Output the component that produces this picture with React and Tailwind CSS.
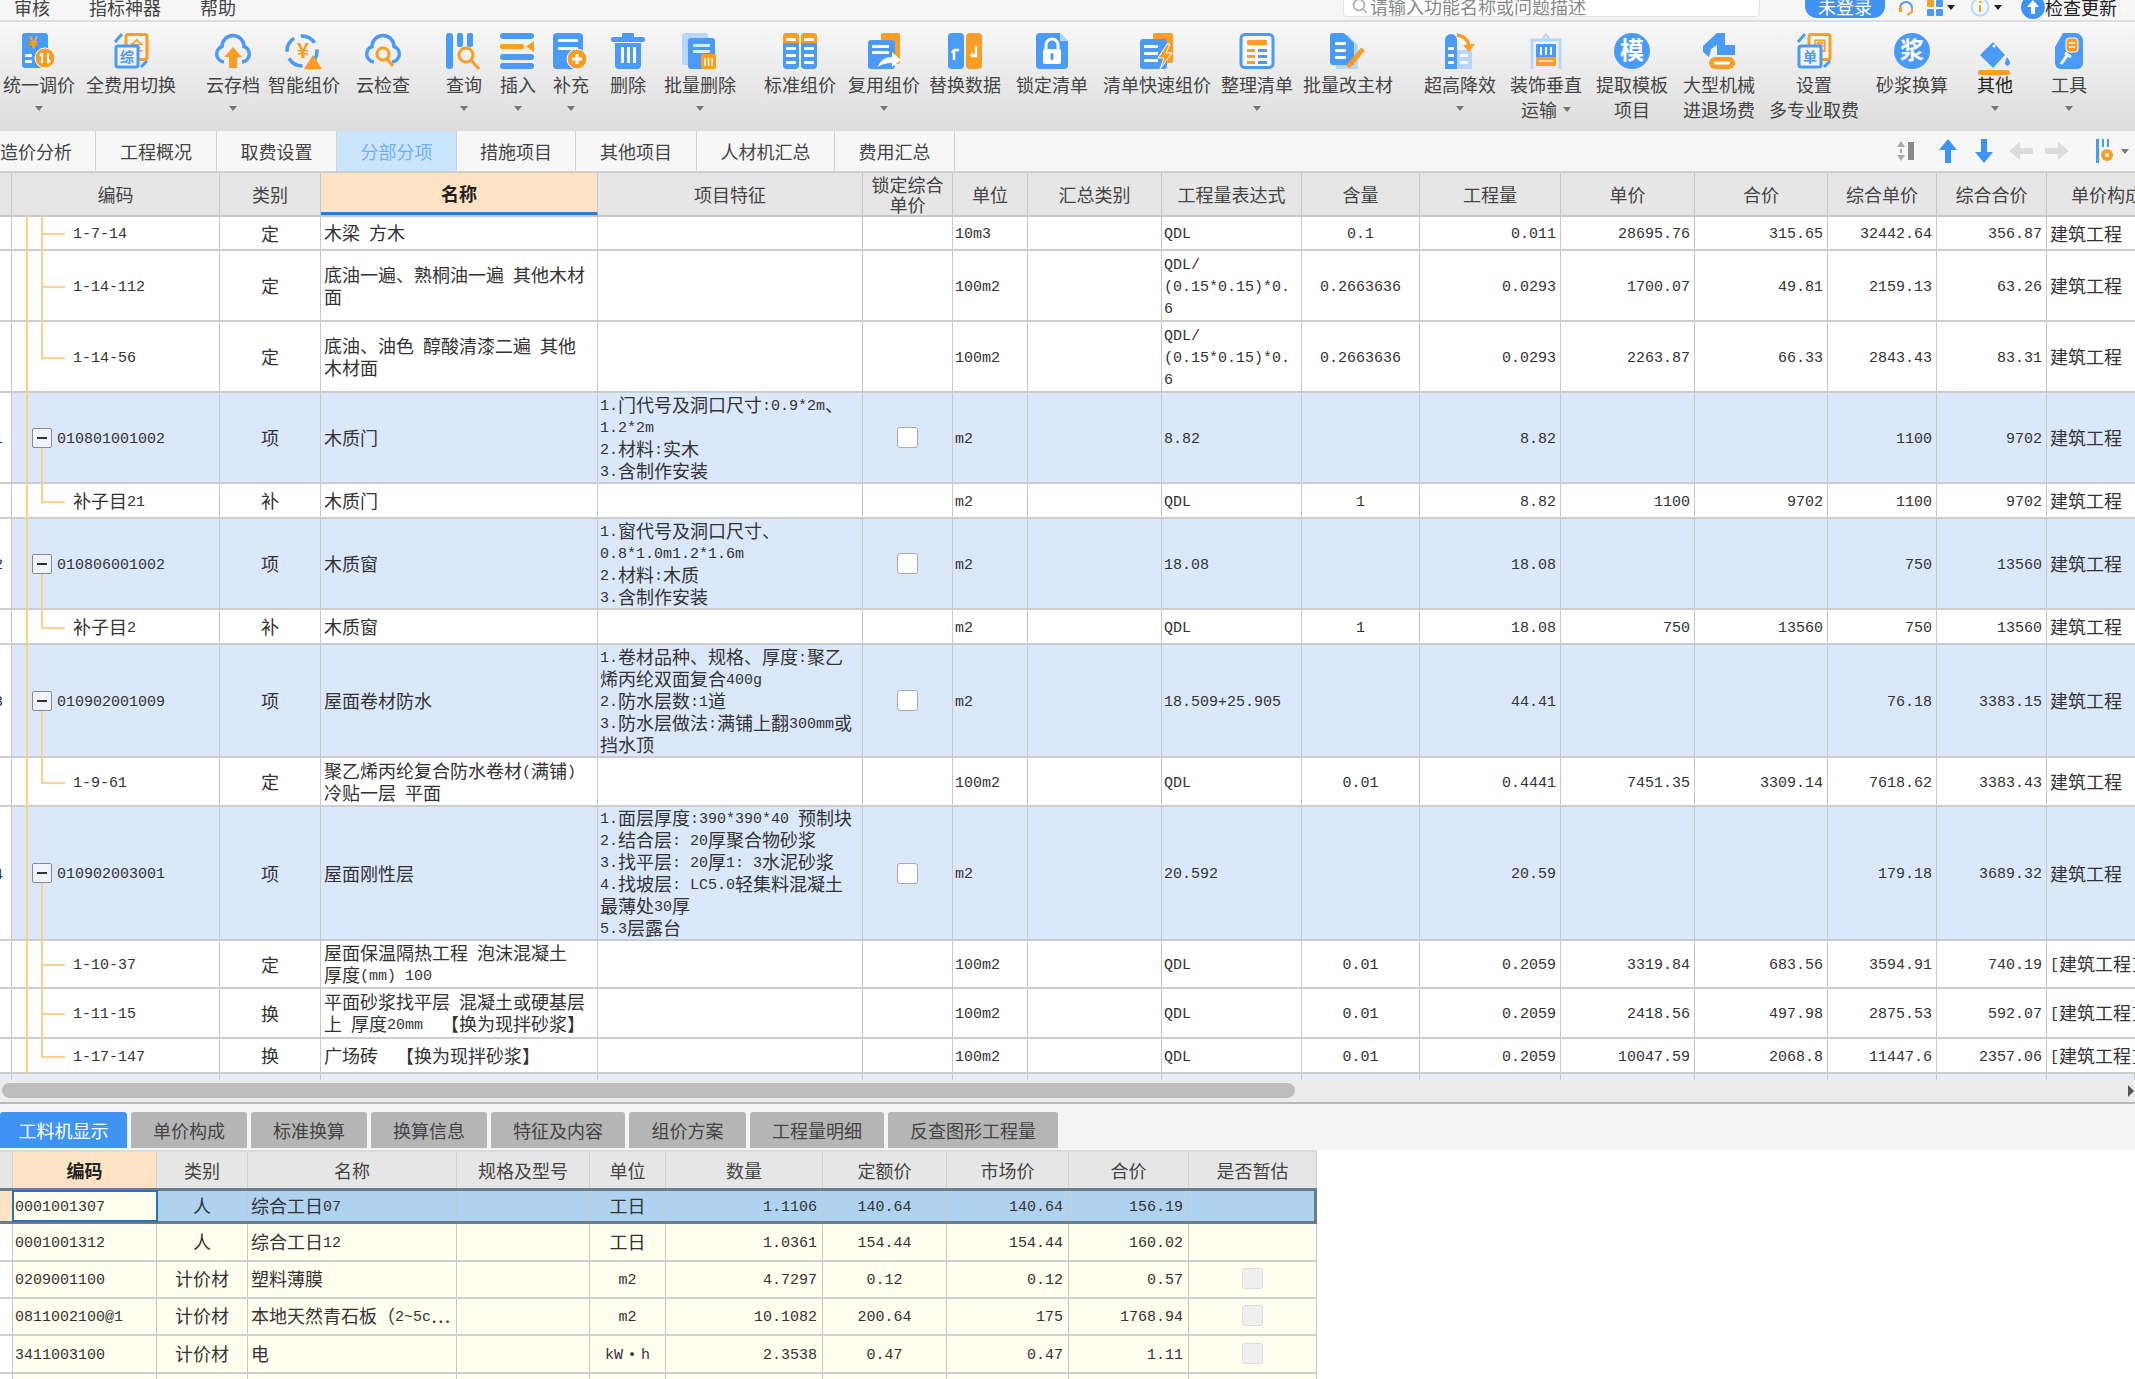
import React from "react";

const B = "#4a9bf7";
const O = "#fa9d22";
const L = "#b6d6fb";

// Latin runs in the original are half width (9px), CJK is 18px, so split them
function T({ children }) {
  const parts = String(children).split(/([\x20-\x7e]+)/);
  return (
    <span>
      {parts.map((p, i) =>
        i % 2 === 1 ? (
          <span key={i} className="relative -top-[2px] font-['Liberation_Mono',monospace] text-[15px] leading-none">{p}</span>
        ) : (
          <span key={i}>{p}</span>
        )
      )}
    </span>
  );
}

const Lines = ({ c = "#fff", x = 6, ys = [], w = 14 }) =>
  ys.map((y) => <rect key={y} x={x} y={y} width={w} height="3" rx="1" fill={c} />);

const CLOUD = "M9 29A8 8 0 0 1 7 13.5A11 11 0 0 1 29 13.5A8 8 0 0 1 27 29";

function DocPair({ top, bottom }) {
  return (
    <>
      <rect x="13" y="1.5" width="21" height="25" rx="2" fill="none" stroke={O} strokeWidth="3" />
      <text x="24" y="17" fontSize="13" fill={O} textAnchor="middle" fontWeight="700">{top}</text>
      <rect x="3" y="13" width="22" height="21" rx="2" fill="#f4f4f4" stroke={B} strokeWidth="3" />
      <text x="14" y="29" fontSize="14" fill={B} textAnchor="middle" fontWeight="700">{bottom}</text>
      <path d="M2 9L9 1M28 34L34 28" stroke={B} strokeWidth="3" fill="none" />
    </>
  );
}

const icons = {
  tongyi: (
    <>
      <rect x="1" y="0" width="26" height="35" rx="3" fill={B} />
      <text x="12" y="15" fontSize="16" fill={O} textAnchor="middle" fontWeight="700">¥</text>
      <Lines x={4} ys={[21, 27]} w={7} />
      <circle cx="24" cy="25" r="10" fill={O} stroke="#fff" />
      <path d="M21 20V30M21 20L19 23M27 30V20M27 30L29 27" stroke="#fff" strokeWidth="2" fill="none" />
    </>
  ),
  quan: <DocPair top="全" bottom="综" />,
  cloudUp: (
    <>
      <path d={CLOUD} fill="none" stroke={B} strokeWidth="3.5" />
      <polygon points="18,14 27,24 22,24 22,35 14,35 14,24 9,24" fill={O} />
    </>
  ),
  smart: (
    <>
      <circle cx="16" cy="18" r="15" fill="none" stroke={B} strokeWidth="3.5" strokeDasharray="16 7" />
      <text x="17" y="25" fontSize="21" fill={O} textAnchor="middle" fontWeight="700">¥</text>
      <polygon points="27,22 36,36 18,36" fill={O} />
    </>
  ),
  cloudSearch: (
    <>
      <path d={CLOUD} fill="none" stroke={B} strokeWidth="3.5" />
      <circle cx="18" cy="21" r="6" fill="none" stroke={O} strokeWidth="3" />
      <path d="M22 26L28 33" stroke={O} strokeWidth="3" />
    </>
  ),
  query: (
    <>
      <rect x="0" y="0" width="7" height="36" rx="3" fill={B} />
      <rect x="11" y="0" width="6" height="14" rx="2" fill={B} />
      <rect x="21" y="0" width="6" height="14" rx="2" fill={B} />
      <circle cx="20" cy="22" r="7" fill="none" stroke={O} strokeWidth="3" />
      <path d="M25 27L33 36" stroke={O} strokeWidth="3" />
    </>
  ),
  insert: (
    <>
      <rect x="0" y="0" width="34" height="6" rx="3" fill={B} />
      <rect x="0" y="11" width="24" height="5" rx="2" fill={O} />
      <polygon points="34,8 34,19 26,13.5" fill={O} />
      <rect x="0" y="21" width="34" height="6" rx="3" fill={B} />
      <rect x="0" y="30" width="34" height="6" rx="3" fill={B} />
    </>
  ),
  supply: (
    <>
      <rect x="0" y="0" width="30" height="36" rx="4" fill={B} />
      <Lines x={5} ys={[6, 14]} w={20} />
      <circle cx="24" cy="26" r="10" fill={O} stroke="#fff" />
      <path d="M24 21V31M19 26H29" stroke="#fff" strokeWidth="3" />
    </>
  ),
  trash: (
    <>
      <rect x="1" y="4" width="34" height="5" rx="2" fill={B} />
      <rect x="12" y="0" width="12" height="6" rx="1" fill={B} />
      <path d="M5 10H31V32a4 4 0 0 1-4 4H9a4 4 0 0 1-4-4Z" fill={B} />
      <rect x="11" y="14" width="3" height="16" fill="#fff" />
      <rect x="17" y="14" width="3" height="16" fill="#fff" />
      <rect x="23" y="14" width="3" height="16" fill="#fff" />
    </>
  ),
  batchDel: (
    <>
      <rect x="0" y="0" width="26" height="32" rx="3" fill={L} />
      <rect x="6" y="5" width="27" height="31" rx="3" fill={B} />
      <Lines x={11} ys={[11, 17]} w={17} c="#d7e9fd" />
      <rect x="19" y="21" width="15" height="15" rx="2" fill={O} />
      <path d="M23 25V33M26.5 25V33M30 25V33" stroke="#fff" strokeWidth="1.5" />
    </>
  ),
  columns: (
    <>
      <rect x="1" y="0" width="16" height="36" rx="4" fill={B} />
      <rect x="19" y="0" width="16" height="36" rx="4" fill={B} />
      <path d="M1 10V4a4 4 0 0 1 4-4h8a4 4 0 0 1 4 4v6ZM19 10V4a4 4 0 0 1 4-4h8a4 4 0 0 1 4 4v6Z" fill={O} />
      <Lines x={4} ys={[5, 14, 21, 28]} w={10} />
      <Lines x={22} ys={[5, 14, 21, 28]} w={10} />
    </>
  ),
  reuse: (
    <>
      <rect x="15" y="0" width="19" height="31" rx="2" fill={O} />
      <rect x="2" y="7" width="27" height="29" rx="3" fill={B} />
      <Lines x={6} ys={[12, 18]} w={17} />
      <path d="M12 34C14 27 20 24 26 24V19L35 27L26 34V30C20 30 16 31 12 34Z" fill="#fff" />
    </>
  ),
  swap: (
    <>
      <rect x="1" y="0" width="16" height="36" rx="4" fill={B} />
      <rect x="19" y="0" width="16" height="36" rx="4" fill={O} />
      <path d="M7 27V17M7 17H12M7 17L5 20" stroke="#fff" strokeWidth="2.5" fill="none" />
      <path d="M29 13V23H24M24 23L26 20" stroke="#fff" strokeWidth="2.5" fill="none" />
    </>
  ),
  lock: (
    <>
      <path d="M6 0H26L34 8V32a4 4 0 0 1-4 4H6a4 4 0 0 1-4-4V4a4 4 0 0 1 4-4Z" fill={B} />
      <path d="M26 0L34 8H26Z" fill={L} />
      <rect x="9" y="16" width="18" height="15" rx="2" fill="#fff" />
      <path d="M12 16V12a6 6 0 0 1 12 0V16" stroke="#fff" strokeWidth="3" fill="none" />
      <rect x="16.5" y="20" width="3" height="7" rx="1.5" fill={B} />
    </>
  ),
  fast: (
    <>
      <rect x="14" y="0" width="20" height="30" rx="2" fill={O} />
      <rect x="1" y="6" width="27" height="30" rx="3" fill={B} />
      <Lines x={5} ys={[12, 19, 26]} w={14} />
      <path d="M28 11L19 25H25L21 36L33 20H27L31 11Z" fill={O} stroke="#fff" />
    </>
  ),
  tidy: (
    <>
      <rect x="2" y="1.5" width="32" height="33" rx="4" fill="#f7f7f7" stroke={B} strokeWidth="3" />
      <rect x="8" y="7" width="20" height="5" rx="1" fill={O} />
      <rect x="8" y="16" width="8" height="3" fill={O} />
      <rect x="19" y="16" width="9" height="3" fill={B} />
      <rect x="8" y="22" width="8" height="3" fill={O} />
      <rect x="19" y="22" width="9" height="3" fill={B} />
      <rect x="8" y="28" width="8" height="3" fill={O} />
      <rect x="19" y="28" width="9" height="3" fill={B} />
    </>
  ),
  pencil: (
    <>
      <path d="M6 2H18L28 12V36H6Z" fill={L} />
      <path d="M3 0H14L24 10V32H3a3 3 0 0 1-3-3V3a3 3 0 0 1 3-3Z" fill={B} />
      <Lines x={5} ys={[9, 16, 23]} w={11} />
      <path d="M18 34L33 16" stroke={O} strokeWidth="5" />
    </>
  ),
  height: (
    <>
      <path d="M3 7a6 6 0 0 1 12 0V36H3Z" fill={B} />
      <rect x="15" y="17" width="15" height="19" fill={L} />
      <Lines x={6} ys={[14, 21, 28]} w={6} />
      <Lines x={18} ys={[21, 28]} w={8} c="#fff" />
      <path d="M15 2C22 3 26 7 27 13" stroke={O} strokeWidth="3.5" fill="none" />
      <polygon points="21,12 33,11 27,19" fill={O} />
    </>
  ),
  lift: (
    <>
      <path d="M4 36V7H32V36" stroke={L} strokeWidth="3" fill="none" />
      <path d="M14 7L18 1L22 7" stroke={L} strokeWidth="2" fill="none" />
      <rect x="8" y="11" width="20" height="13" fill={B} />
      <path d="M13 14V22M18 14V22M23 14V22" stroke="#fff" strokeWidth="2" />
      <rect x="8" y="24" width="20" height="9" fill={O} />
      <rect x="11" y="27" width="14" height="2" fill="#fde0b5" />
    </>
  ),
  mo: (
    <>
      <circle cx="18" cy="18" r="18" fill={B} />
      <text x="18" y="26" fontSize="24" fill="#fff" textAnchor="middle" fontWeight="700">模</text>
    </>
  ),
  digger: (
    <>
      <path d="M16 0L2 13V19L8 24L10 16L16 12V22H34V12H24V0Z" fill={B} />
      <rect x="8" y="24" width="26" height="12" rx="6" fill={O} />
      <rect x="13" y="28.5" width="16" height="3" rx="1" fill="#fff" />
    </>
  ),
  dan: <DocPair top="图" bottom="单" />,
  jiang: (
    <>
      <circle cx="18" cy="18" r="18" fill={B} />
      <text x="18" y="26" fontSize="24" fill="#fff" textAnchor="middle" fontWeight="700">浆</text>
    </>
  ),
  other: (
    <>
      <path d="M16 9L28 22L16 35L3 22Z" fill={B} />
      <path d="M30 24C33 28 34 30 32 32C30 34 27 31 28 29Z" fill={B} />
      <circle cx="17" cy="13" r="1.5" fill="#fff" />
      <rect x="1" y="37" width="32" height="5" rx="2" fill={O} />
    </>
  ),
  tools: (
    <>
      <path d="M12 0H24a8 8 0 0 1 8 8V30a6 6 0 0 1-6 6H10a6 6 0 0 1-6-6V14Z" fill={B} />
      <rect x="15" y="5" width="12" height="14" rx="3" fill={O} stroke="#fff" />
      <path d="M18 10H24M18 14H24" stroke="#fff" strokeWidth="1.5" />
      <path d="M10 31L17 21M14 20L20 24" stroke="#fff" strokeWidth="3" fill="none" />
    </>
  ),
};

const toolItems = [
  { icon: "tongyi", label: "统一调价", box: "ml-[1px] w-[76px]", caret: true },
  { icon: "quan", label: "全费用切换", box: "ml-[9px] w-[90px]" },
  { icon: "cloudUp", label: "云存档", box: "ml-[30px] w-[54px]", caret: true },
  { icon: "smart", label: "智能组价", box: "ml-[8px] w-[72px]" },
  { icon: "cloudSearch", label: "云检查", box: "ml-[16px] w-[54px]" },
  { icon: "query", label: "查询", box: "ml-[36px] w-[36px]", caret: true },
  { icon: "insert", label: "插入", box: "ml-[18px] w-[36px]", caret: true },
  { icon: "supply", label: "补充", box: "ml-[17px] w-[36px]", caret: true },
  { icon: "trash", label: "删除", box: "ml-[21px] w-[36px]" },
  { icon: "batchDel", label: "批量删除", box: "ml-[18px] w-[72px]", caret: true },
  { icon: "columns", label: "标准组价", box: "ml-[28px] w-[72px]" },
  { icon: "reuse", label: "复用组价", box: "ml-[12px] w-[72px]", caret: true },
  { icon: "swap", label: "替换数据", box: "ml-[9px] w-[72px]" },
  { icon: "lock", label: "锁定清单", box: "ml-[15px] w-[72px]" },
  { icon: "fast", label: "清单快速组价", box: "ml-[15px] w-[108px]" },
  { icon: "tidy", label: "整理清单", box: "ml-[10px] w-[72px]", caret: true },
  { icon: "pencil", label: "批量改主材", box: "ml-[10px] w-[90px]" },
  { icon: "height", label: "超高降效", box: "ml-[31px] w-[72px]", caret: true },
  { icon: "lift", label: "装饰垂直", sub: "运输", subCaret: true, box: "ml-[14px] w-[72px]" },
  { icon: "mo", label: "提取模板", sub: "项目", box: "ml-[14px] w-[72px]" },
  { icon: "digger", label: "大型机械", sub: "进退场费", box: "ml-[15px] w-[72px]" },
  { icon: "dan", label: "设置", sub: "多专业取费", box: "ml-[14px] w-[90px]" },
  { icon: "jiang", label: "砂浆换算", box: "ml-[17px] w-[72px]" },
  { icon: "other", label: "其他", box: "ml-[29px] w-[36px]", caret: true, dark: true },
  { icon: "tools", label: "工具", box: "ml-[38px] w-[36px]", caret: true },
];

function Caret({ className = "" }) {
  return <span className={`inline-block w-0 h-0 border-x-[4px] border-x-transparent border-t-[5px] border-t-[#777] ${className}`} />;
}

function ToolItem({ item }) {
  return (
    <div className={`flex flex-col items-center shrink-0 ${item.box}`}>
      <svg viewBox="0 0 36 36" className="w-[36px] h-[36px] overflow-visible shrink-0" fontFamily="Noto Sans CJK SC">
        {icons[item.icon]}
      </svg>
      <div className={`mt-[5px] h-[21px] leading-[21px] whitespace-nowrap ${item.dark ? "text-[#222]" : "text-[#444]"}`}>{item.label}</div>
      {item.sub && (
        <div className="mt-[4px] h-[21px] leading-[21px] whitespace-nowrap text-[#444] flex items-center gap-[6px]">
          {item.sub}
          {item.subCaret && <Caret />}
        </div>
      )}
      {item.caret && <Caret className="mt-[11px]" />}
    </div>
  );
}

function TopBar() {
  return (
    <div className="h-[22px] bg-[#f6f6f6] border-b-2 border-[#dedede] flex overflow-hidden text-[#444]">
      <span className="ml-[14px] -mt-[3px] leading-[21px]">审核</span>
      <span className="ml-[39px] -mt-[3px] leading-[21px]">指标神器</span>
      <span className="ml-[39px] -mt-[3px] leading-[21px]">帮助</span>
      <div className="ml-[1107px] w-[417px] h-[17px] bg-white border border-t-0 border-[#e2e2e2] rounded-b-[4px] flex items-start pl-[8px] overflow-hidden text-[#888]">
        <svg viewBox="0 0 16 16" className="w-[16px] h-[16px] -mt-[2px]" fill="none" stroke="#aaa" strokeWidth="1.5">
          <circle cx="7" cy="7" r="5.5" />
          <path d="M11 11L15 15" />
        </svg>
        <span className="ml-[2px] -mt-[4px] leading-[21px]">请输入功能名称或问题描述</span>
      </div>
      <span className="ml-[45px] w-[80px] h-[18px] rounded-b-[12px] bg-[#3f93f5] text-white text-center leading-[13px]">未登录</span>
      <svg viewBox="0 0 18 18" className="ml-[12px] w-[18px] h-[18px] -mt-[1px] shrink-0" fill="none" strokeWidth="2">
        <path d="M3 9A6 6 0 0 1 15 9" stroke={B} />
        <path d="M15 9V13L10 16" stroke={O} />
        <rect x="2" y="8" width="3" height="5" fill={O} />
      </svg>
      <div className="ml-[12px] w-[16px] h-[16px] grid grid-cols-2 gap-[2px] shrink-0">
        <span className="bg-[#fa9d22] rounded-[1px]" />
        <span className="bg-[#4a9bf7] rounded-[1px]" />
        <span className="bg-[#4a9bf7] rounded-[1px]" />
        <span className="bg-[#4a9bf7] rounded-[1px]" />
      </div>
      <Caret className="ml-[4px] mt-[5px] !border-t-[#222]" />
      <svg viewBox="0 0 20 20" className="ml-[15px] w-[20px] h-[20px] -mt-[3px] shrink-0" fill="none">
        <circle cx="10" cy="10" r="8.5" stroke={L} strokeWidth="2" />
        <path d="M10 8V15" stroke={O} strokeWidth="2" />
        <circle cx="10.5" cy="5" r="1.3" fill={O} />
      </svg>
      <Caret className="ml-[4px] mt-[5px] !border-t-[#222]" />
      <svg viewBox="0 0 24 24" className="ml-[19px] w-[24px] h-[24px] -mt-[5px] shrink-0">
        <circle cx="12" cy="12" r="12" fill="#3f93f5" />
        <path d="M12 5L18 12H14V19H10V12H6Z" fill="#fff" />
      </svg>
      <span className="-mt-[3px] leading-[21px] text-[#222] whitespace-nowrap">检查更新</span>
    </div>
  );
}

const mainTabs = [
  { label: "造价分析", w: "w-[96px] text-left" },
  { label: "工程概况", w: "w-[121px] text-center" },
  { label: "取费设置", w: "w-[120px] text-center" },
  { label: "分部分项", w: "w-[120px] text-center", active: true },
  { label: "措施项目", w: "w-[119px] text-center" },
  { label: "其他项目", w: "w-[121px] text-center" },
  { label: "人材机汇总", w: "w-[138px] text-center" },
  { label: "费用汇总", w: "w-[120px] text-center" },
];

function TabRow() {
  return (
    <div className="h-[42px] bg-[#f7f7f7] border-b-2 border-[#cfcfcf] flex items-stretch">
      {mainTabs.map((t) => (
        <div
          key={t.label}
          className={`${t.w} border-r border-[#d2d2d2] leading-[40px] ${t.active ? "bg-[#cbe5ff] text-[#6fb0f5]" : "text-[#444]"}`}
        >
          {t.label}
        </div>
      ))}
      <div className="ml-auto flex items-center pr-[6px]">
        <svg viewBox="0 0 18 24" className="w-[18px] h-[24px]">
          <polygon points="4,2 8,8 0,8" fill="#aaa" />
          <polygon points="4,22 8,16 0,16" fill="#aaa" />
          <rect x="3" y="10" width="2" height="4" fill="#aaa" />
          <rect x="11" y="3" width="6" height="18" fill="#888" />
        </svg>
        <svg viewBox="0 0 18 24" className="ml-[24px] w-[18px] h-[30px]">
          <path d="M9 0L18 11H12V24H6V11H0Z" fill="#3f93f5" />
        </svg>
        <svg viewBox="0 0 18 24" className="ml-[18px] w-[18px] h-[30px]">
          <path d="M9 24L18 13H12V0H6V13H0Z" fill="#3f93f5" />
        </svg>
        <svg viewBox="0 0 24 18" className="ml-[16px] w-[24px] h-[18px]">
          <path d="M0 9L11 0V6H24V12H11V18Z" fill="#dcdcdc" />
        </svg>
        <svg viewBox="0 0 24 18" className="ml-[12px] w-[24px] h-[18px]">
          <path d="M24 9L13 0V6H0V12H13V18Z" fill="#dcdcdc" />
        </svg>
        <svg viewBox="0 0 24 24" className="ml-[26px] w-[24px] h-[24px]">
          <rect x="1" y="0" width="3" height="24" fill={B} />
          <rect x="7" y="0" width="2" height="8" fill={B} />
          <rect x="12" y="0" width="2" height="8" fill={B} />
          <circle cx="12" cy="16" r="6" fill={O} />
          <circle cx="12" cy="16" r="2" fill="#fff" />
        </svg>
        <Caret className="ml-[2px]" />
      </div>
    </div>
  );
}

const MAIN_COLS = "grid-cols-[12px_208px_101px_277px_265px_90px_75px_134px_140px_118px_141px_134px_133px_109px_110px_88px]";

const heads = [
  ["", ""], ["编码", ""], ["类别", ""], ["名称", "hot"], ["项目特征", ""], ["锁定综合\n单价", ""], ["单位", ""], ["汇总类别", ""],
  ["工程量表达式", ""], ["含量", ""], ["工程量", ""], ["单价", ""], ["合价", ""], ["综合单价", ""], ["综合合价", ""], ["单价构成", "clip"],
];

const FEAT_DOOR = "1.门代号及洞口尺寸:0.9*2m、\n1.2*2m\n2.材料:实木\n3.含制作安装";
const FEAT_WIN = "1.窗代号及洞口尺寸、\n0.8*1.0m1.2*1.6m\n2.材料:木质\n3.含制作安装";
const FEAT_ROOF = "1.卷材品种、规格、厚度:聚乙\n烯丙纶双面复合400g\n2.防水层数:1道\n3.防水层做法:满铺上翻300mm或\n挡水顶";
const FEAT_RIGID = "1.面层厚度:390*390*40 预制块\n2.结合层: 20厚聚合物砂浆\n3.找平层: 20厚1: 3水泥砂浆\n4.找坡层: LC5.0轻集料混凝土\n最薄处30厚\n5.3层露台";
const EXPR = "QDL/\n(0.15*0.15)*0.\n6";
const W = "建筑工程";
const WB = "[建筑工程]";

const rows = [
  { h: "h-[34px]", code: "1-7-14", type: "定", name: "木梁 方木", unit: "10m3", expr: "QDL", qty: "0.1", amt: "0.011", p: "28695.76", t: "315.65", cp: "32442.64", ct: "356.87", b: W, tree: "full" },
  { h: "h-[71px]", code: "1-14-112", type: "定", name: "底油一遍、熟桐油一遍 其他木材\n面", unit: "100m2", expr: EXPR, qty: "0.2663636", amt: "0.0293", p: "1700.07", t: "49.81", cp: "2159.13", ct: "63.26", b: W, tree: "full" },
  { h: "h-[71px]", code: "1-14-56", type: "定", name: "底油、油色 醇酸清漆二遍 其他\n木材面", unit: "100m2", expr: EXPR, qty: "0.2663636", amt: "0.0293", p: "2263.87", t: "66.33", cp: "2843.43", ct: "83.31", b: W, tree: "end" },
  { h: "h-[91px]", item: true, n: "1", code: "010801001002", type: "项", name: "木质门", feat: FEAT_DOOR, unit: "m2", expr: "8.82", amt: "8.82", cp: "1100", ct: "9702", b: W },
  { h: "h-[35px]", code: "补子目21", type: "补", name: "木质门", unit: "m2", expr: "QDL", qty: "1", amt: "8.82", p: "1100", t: "9702", cp: "1100", ct: "9702", b: W, tree: "end" },
  { h: "h-[91px]", item: true, n: "2", code: "010806001002", type: "项", name: "木质窗", feat: FEAT_WIN, unit: "m2", expr: "18.08", amt: "18.08", cp: "750", ct: "13560", b: W },
  { h: "h-[35px]", code: "补子目2", type: "补", name: "木质窗", unit: "m2", expr: "QDL", qty: "1", amt: "18.08", p: "750", t: "13560", cp: "750", ct: "13560", b: W, tree: "end" },
  { h: "h-[113px]", item: true, n: "3", code: "010902001009", type: "项", name: "屋面卷材防水", feat: FEAT_ROOF, unit: "m2", expr: "18.509+25.905", amt: "44.41", cp: "76.18", ct: "3383.15", b: W },
  { h: "h-[49px]", code: "1-9-61", type: "定", name: "聚乙烯丙纶复合防水卷材(满铺)\n冷贴一层 平面", unit: "100m2", expr: "QDL", qty: "0.01", amt: "0.4441", p: "7451.35", t: "3309.14", cp: "7618.62", ct: "3383.43", b: W, tree: "end" },
  { h: "h-[134px]", item: true, n: "4", code: "010902003001", type: "项", name: "屋面刚性层", feat: FEAT_RIGID, unit: "m2", expr: "20.592", amt: "20.59", cp: "179.18", ct: "3689.32", b: W },
  { h: "h-[48px]", code: "1-10-37", type: "定", name: "屋面保温隔热工程 泡沫混凝土\n厚度(mm) 100", unit: "100m2", expr: "QDL", qty: "0.01", amt: "0.2059", p: "3319.84", t: "683.56", cp: "3594.91", ct: "740.19", b: WB, tree: "full" },
  { h: "h-[50px]", code: "1-11-15", type: "换", name: "平面砂浆找平层 混凝土或硬基层\n上 厚度20mm  【换为现拌砂浆】", unit: "100m2", expr: "QDL", qty: "0.01", amt: "0.2059", p: "2418.56", t: "497.98", cp: "2875.53", ct: "592.07", b: WB, tree: "full" },
  { h: "h-[35px]", code: "1-17-147", type: "换", name: "广场砖  【换为现拌砂浆】", unit: "100m2", expr: "QDL", qty: "0.01", amt: "0.2059", p: "10047.59", t: "2068.8", cp: "11447.6", ct: "2357.06", b: WB, tree: "end" },
];

const LINE = "absolute bg-[#fbd08e]";

function CodeCell({ row }) {
  return (
    <div className="relative flex items-center border-r border-[#c8c8c8]">
      <span className={`${LINE} left-[14px] -top-[2px] -bottom-[2px] w-[2px]`} />
      {row.item ? (
        <>
          <span className={`${LINE} left-[29px] top-1/2 -bottom-[2px] w-[2px]`} />
          <span className="relative ml-[20px] w-[20px] h-[20px] bg-[#eef3fc] border border-[#8b8b8b] rounded-[2px] flex items-center justify-center shrink-0">
            <span className="w-[10px] h-[2px] bg-[#333]" />
          </span>
          <span className="ml-[5px] leading-[21px]"><T>{row.code}</T></span>
        </>
      ) : (
        <>
          <span className={`${LINE} left-[29px] -top-[2px] w-[2px] ${row.tree === "end" ? "bottom-1/2" : "-bottom-[2px]"}`} />
          <span className={`${LINE} left-[29px] top-1/2 w-[24px] h-[2px]`} />
          <span className="ml-[61px] leading-[21px]"><T>{row.code}</T></span>
        </>
      )}
    </div>
  );
}

function Cell({ className = "", children }) {
  return (
    <div className={`flex items-center overflow-hidden border-r border-[#c8c8c8] whitespace-pre leading-[21px] ${className}`}>
      {children}
    </div>
  );
}

function Check({ muted }) {
  return (
    <span className={`block w-[21px] h-[21px] rounded-[3px] border ${muted ? "bg-[#efefef] border-[#dcdcdc]" : "bg-white border-[#a9a9a9]"}`} />
  );
}

function MainRow({ row }) {
  const numeric = "justify-end pr-[4px]";
  return (
    <div className={`grid ${MAIN_COLS} ${row.h} border-b-2 border-[#cdcdcd] ${row.item ? "bg-[#dbe7fb]" : "bg-white"}`}>
      <div className="border-r border-[#c8c8c8] overflow-hidden flex items-center justify-end pr-[8px] bg-white">
        <T>{row.n || ""}</T>
      </div>
      <CodeCell row={row} />
      <Cell className="justify-center">{row.type}</Cell>
      <Cell className="pl-[3px]"><div><T>{row.name}</T></div></Cell>
      <Cell className="pl-[2px]"><div><T>{row.feat || ""}</T></div></Cell>
      <Cell className="justify-center">{row.item && <Check />}</Cell>
      <Cell className="pl-[2px]"><T>{row.unit}</T></Cell>
      <Cell />
      <Cell className="pl-[2px]"><div><T>{row.expr}</T></div></Cell>
      <Cell className="justify-center"><T>{row.qty || ""}</T></Cell>
      <Cell className={numeric}><T>{row.amt}</T></Cell>
      <Cell className={numeric}><T>{row.p || ""}</T></Cell>
      <Cell className={numeric}><T>{row.t || ""}</T></Cell>
      <Cell className={numeric}><T>{row.cp}</T></Cell>
      <Cell className={numeric}><T>{row.ct}</T></Cell>
      <Cell className="pl-[3px] border-r-0"><T>{row.b}</T></Cell>
    </div>
  );
}

function MainGrid() {
  return (
    <div>
      <div className={`grid ${MAIN_COLS} h-[44px] bg-[#e6e6e6] border-b-2 border-[#c8c8c8] text-[#444]`}>
        {heads.map(([label, kind], i) => (
          <div
            key={i}
            className={`flex items-center whitespace-pre leading-[20px] text-center overflow-hidden border-r border-[#c8c8c8] ${
              kind === "clip" ? "pl-[24px] border-r-0" : "justify-center"
            } ${kind === "hot" ? "bg-[#fde3c4] font-bold text-[#222] border-b-[3px] border-b-[#2a78e4]" : ""}`}
          >
            {label}
          </div>
        ))}
      </div>
      {rows.map((r) => (
        <MainRow key={r.code} row={r} />
      ))}
      <div className={`grid ${MAIN_COLS} h-[6px] bg-[#e6ecfa]`}>
        {heads.map((_, i) => (
          <div key={i} className="border-r border-[#c8c8c8]" />
        ))}
      </div>
    </div>
  );
}

function ScrollBar() {
  return (
    <div className="h-[24px] bg-[#ececec] border-b-2 border-[#b9b9b9] flex items-start justify-between pl-[2px] pt-[3px]">
      <div className="w-[1293px] h-[15px] rounded-full bg-[#bdbdbd]" />
      <span className="mt-[2px] mr-[1px] w-0 h-0 border-y-[6px] border-y-transparent border-l-[6px] border-l-[#555]" />
    </div>
  );
}

const subTabs = [
  { label: "工料机显示", w: "w-[127px]", active: true },
  { label: "单价构成", w: "w-[116px]" },
  { label: "标准换算", w: "w-[116px]" },
  { label: "换算信息", w: "w-[116px]" },
  { label: "特征及内容", w: "w-[134px]" },
  { label: "组价方案", w: "w-[117px]" },
  { label: "工程量明细", w: "w-[134px]" },
  { label: "反查图形工程量", w: "w-[170px]" },
];

function SubTabs() {
  return (
    <div className="h-[46px] bg-[#f5f5f5] pt-[8px] flex gap-[4px] items-start">
      {subTabs.map((t) => (
        <div
          key={t.label}
          className={`${t.w} h-[36px] rounded-t-[3px] text-center leading-[36px] ${t.active ? "bg-[#3f93f5] text-white" : "bg-[#b5b5b5] text-[#444]"}`}
        >
          {t.label}
        </div>
      ))}
    </div>
  );
}

const SUB_COLS = "grid-cols-[13px_144px_91px_209px_133px_76px_157px_124px_122px_120px_128px]";

const subHeads = ["", "编码", "类别", "名称", "规格及型号", "单位", "数量", "定额价", "市场价", "合价", "是否暂估"];

const subRows = [
  { h: "h-[36px]", code: "0001001307", type: "人", name: "综合工日07", unit: "工日", num: "1.1106", q: "140.64", m: "140.64", t: "156.19", selected: true },
  { h: "h-[38px]", code: "0001001312", type: "人", name: "综合工日12", unit: "工日", num: "1.0361", q: "154.44", m: "154.44", t: "160.02" },
  { h: "h-[37px]", code: "0209001100", type: "计价材", name: "塑料薄膜", unit: "m2", num: "4.7297", q: "0.12", m: "0.12", t: "0.57", check: true },
  { h: "h-[37px]", code: "0811002100@1", type: "计价材", name: "本地天然青石板（2~5c…", unit: "m2", num: "10.1082", q: "200.64", m: "175", t: "1768.94", check: true },
  { h: "h-[38px]", code: "3411003100", type: "计价材", name: "电", unit: "kW・h", num: "2.3538", q: "0.47", m: "0.47", t: "1.11", check: true },
  { h: "h-[38px]", code: "", type: "", name: "", unit: "", num: "", q: "", m: "", t: "" },
];

function SubCell({ className = "", children }) {
  return (
    <div className={`flex items-center overflow-hidden whitespace-nowrap border-r border-[#c8c8c8] pb-[2px] ${className}`}>{children}</div>
  );
}

function SubRow({ row }) {
  const selected = row.selected;
  return (
    <div className={`grid ${SUB_COLS} ${row.h} ${selected ? "bg-[#aed2f0] border-y-[3px] border-[#6d7c8c]" : "bg-[#fffeef] border-b-2 border-[#d0d0d0]"}`}>
      <div className={`border-r border-[#c8c8c8] ${selected ? "bg-[#fde3c4]" : "bg-white"}`} />
      <SubCell className={`pl-[2px] ${selected ? "bg-[#fffeef] outline-2 -outline-offset-1 outline-[#2d6fb8]" : ""}`}><T>{row.code}</T></SubCell>
      <SubCell className="justify-center">{row.type}</SubCell>
      <SubCell className="pl-[3px]"><T>{row.name}</T></SubCell>
      <SubCell />
      <SubCell className="justify-center"><T>{row.unit}</T></SubCell>
      <SubCell className="justify-end pr-[5px]"><T>{row.num}</T></SubCell>
      <SubCell className="justify-center"><T>{row.q}</T></SubCell>
      <SubCell className="justify-end pr-[5px]"><T>{row.m}</T></SubCell>
      <SubCell className="justify-end pr-[5px]"><T>{row.t}</T></SubCell>
      <SubCell className={`justify-center ${selected ? "border-r-[3px] border-r-[#6d7c8c]" : ""}`}>{row.check && <Check muted />}</SubCell>
    </div>
  );
}

function SubGrid() {
  return (
    <div className="w-[1317px] border-t-2 border-[#dcdcdc]">
      <div className={`grid ${SUB_COLS} h-[36px] bg-[#e6e6e6] text-[#444]`}>
        {subHeads.map((h, i) => (
          <div
            key={i}
            className={`flex items-center justify-center border-r border-[#d0d0d0] ${i === 1 ? "bg-[#fde3c4] font-bold text-[#222]" : ""}`}
          >
            {h}
          </div>
        ))}
      </div>
      {subRows.map((r, i) => (
        <SubRow key={i} row={r} />
      ))}
    </div>
  );
}

export default function App() {
  return (
    <div className="w-[2135px] h-[1379px] overflow-hidden bg-white text-[18px] text-[#333] font-['Noto_Sans_CJK_SC','Liberation_Sans',sans-serif]">
      <TopBar />
      <div className="h-[109px] flex pt-[11px] bg-linear-to-b from-[#f8f8f8] to-[#dcdcdc]">
        {toolItems.map((item) => (
          <ToolItem key={item.label} item={item} />
        ))}
      </div>
      <TabRow />
      <MainGrid />
      <ScrollBar />
      <SubTabs />
      <SubGrid />
    </div>
  );
}
